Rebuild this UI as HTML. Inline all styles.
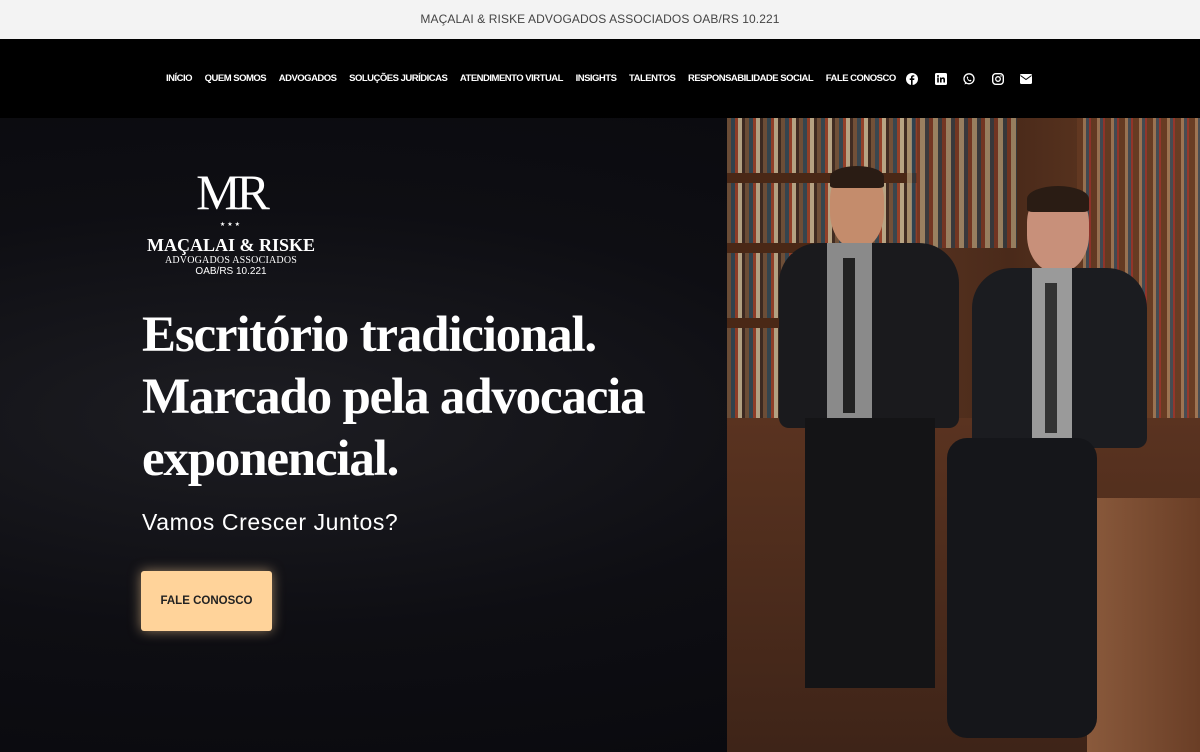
<!DOCTYPE html>
<html><head><meta charset="utf-8"><style>
*{margin:0;padding:0;box-sizing:border-box}
body{width:1200px;height:752px;overflow:hidden;background:#0b0b10;font-family:"Liberation Sans",sans-serif}
.top{height:39px;background:#f3f3f3;color:#444;font-size:12px;letter-spacing:.1px;text-align:center;line-height:39px}
.nav{height:79px;background:#000;position:relative}
.links{position:absolute;left:166px;top:34px;white-space:nowrap;font-size:0}
.nav a{color:#fff;font-size:9.5px;font-weight:bold;margin-right:12.6px;text-decoration:none;letter-spacing:-.5px}
.nav svg{position:absolute;top:73px}
.hero{position:relative;height:634px;background:radial-gradient(ellipse at 260px 300px,#1d1d22 0%,#0e0e13 45%,#08080c 100%)}
.photo{position:absolute;left:727px;top:0;width:473px;height:634px;background:linear-gradient(90deg,#3a2218,#5b3522 30%,#4a2a1a 60%,#6b3e24);overflow:hidden}
h1{position:absolute;left:142px;top:186px;color:#fff;font-family:"Liberation Serif",serif;font-size:51px;font-weight:bold;line-height:62px;letter-spacing:-1.2px;white-space:nowrap}
.sub{position:absolute;left:142px;top:391px;color:#fff;font-size:23px;letter-spacing:.6px}
.btn{position:absolute;left:141px;top:453px;width:131px;height:60px;background:#ffd39a;border-radius:3px;box-shadow:0 0 12px rgba(255,211,154,.55);color:#222;font-size:11.5px;font-weight:bold;text-align:center;line-height:60px}
.logo{position:absolute;left:141px;top:45px;color:#fff;text-align:center;width:180px;font-family:"Liberation Serif",serif;white-space:nowrap}
</style></head><body>
<div class="top">MAÇALAI &amp; RISKE ADVOGADOS ASSOCIADOS OAB/RS 10.221</div>
<div class="nav">
<div class="links"><a>INÍCIO</a><a>QUEM SOMOS</a><a>ADVOGADOS</a><a>SOLUÇÕES JURÍDICAS</a><a>ATENDIMENTO VIRTUAL</a><a>INSIGHTS</a><a>TALENTOS</a><a>RESPONSABILIDADE SOCIAL</a><a>FALE CONOSCO</a></div>
<svg style="left:906px;top:34px" width="12" height="12" viewBox="0 0 12 12"><circle cx="6" cy="6" r="6" fill="#fff"/><path d="M6.6 12V7h1.6l.2-1.6H6.6v-1c0-.5.2-.8.8-.8h.9V2.2H7.1C5.9 2.2 5 2.9 5 4.2v1.2H3.7V7H5v5z" fill="#000"/></svg>
<svg style="left:935px;top:34px" width="12" height="12" viewBox="0 0 12 12"><rect width="12" height="12" rx="1.5" fill="#fff"/><rect x="2.2" y="4.5" width="1.6" height="5" fill="#000"/><circle cx="3" cy="3" r="1" fill="#000"/><path d="M5 4.5h1.5v.8c.4-.6 1-.9 1.7-.9 1.2 0 1.8.8 1.8 2.2v2.9H8.4V7c0-.7-.3-1.1-.8-1.1s-1 .4-1 1.1v2.5H5z" fill="#000"/></svg>
<svg style="left:963px;top:34px" width="12" height="12" viewBox="0 0 12 12"><circle cx="6" cy="5.8" r="5" fill="none" stroke="#fff" stroke-width="1.3"/><path d="M1.5 11.5l.8-2.6 1.6 1.5z" fill="#fff"/><path d="M4 3.8c.3-.4.8-.3 1 .2l.3.8-.5.6c.4.8 1 1.4 1.8 1.8l.6-.5.8.3c.5.2.5.7.2 1-.6.6-1.6.5-2.7-.3C4.4 6.7 3.4 4.7 4 3.8z" fill="#fff"/></svg>
<svg style="left:992px;top:34px" width="12" height="12" viewBox="0 0 12 12"><rect x=".7" y=".7" width="10.6" height="10.6" rx="3" fill="none" stroke="#fff" stroke-width="1.4"/><circle cx="6" cy="6" r="2.3" fill="none" stroke="#fff" stroke-width="1.3"/><circle cx="9" cy="3" r=".7" fill="#fff"/></svg>
<svg style="left:1020px;top:35px" width="12" height="10" viewBox="0 0 12 10"><rect width="12" height="10" rx="1.2" fill="#fff"/><path d="M.5 1.5L6 5.5l5.5-4" fill="none" stroke="#000" stroke-width="1"/></svg>
</div>
<div class="hero">
<div class="photo">
 <div style="position:absolute;left:0;top:0;width:190px;height:300px;background:repeating-linear-gradient(90deg,#7a5a40 0 4px,#2f4d5e 4px 8px,#a8452c 8px 11px,#d8c9a4 11px 15px,#3b2a22 15px 18px);opacity:.75"></div>
 <div style="position:absolute;left:0;top:55px;width:190px;height:10px;background:#4a2816"></div>
 <div style="position:absolute;left:0;top:125px;width:190px;height:10px;background:#4a2816"></div>
 <div style="position:absolute;left:0;top:200px;width:190px;height:10px;background:#4a2816"></div>
 <div style="position:absolute;left:180px;top:0;width:110px;height:130px;background:repeating-linear-gradient(90deg,#c9b58c 0 5px,#2a4050 5px 9px,#8a3b26 9px 13px);opacity:.6"></div>
 <div style="position:absolute;left:350px;top:0;width:123px;height:330px;background:repeating-linear-gradient(90deg,#6b3e24 0 6px,#c8a27a 6px 9px,#2d5a7a 9px 12px,#b33 12px 14px);opacity:.55"></div>
 <div style="position:absolute;left:0;top:300px;width:473px;height:334px;background:linear-gradient(180deg,#5a3320,#3e2418)"></div>
 <div style="position:absolute;left:360px;top:380px;width:113px;height:254px;background:linear-gradient(90deg,#8a5a3c,#6a3e26)"></div>
 <div style="position:absolute;left:103px;top:50px;width:54px;height:80px;background:#c48c6c;border-radius:40% 40% 45% 45%"></div>
 <div style="position:absolute;left:103px;top:48px;width:54px;height:22px;background:#2a1c14;border-radius:50% 50% 10% 10%"></div>
 <div style="position:absolute;left:52px;top:125px;width:180px;height:185px;background:#1a1a1d;border-radius:40px 40px 10px 10px"></div>
 <div style="position:absolute;left:100px;top:125px;width:45px;height:175px;background:#8a8a8a"></div>
 <div style="position:absolute;left:116px;top:140px;width:12px;height:155px;background:#222"></div>
 <div style="position:absolute;left:78px;top:300px;width:130px;height:270px;background:#141416"></div>
 <div style="position:absolute;left:300px;top:72px;width:62px;height:82px;background:#c8907a;border-radius:40% 40% 45% 45%"></div>
 <div style="position:absolute;left:300px;top:68px;width:62px;height:26px;background:#2a1c14;border-radius:50% 50% 10% 10%"></div>
 <div style="position:absolute;left:245px;top:150px;width:175px;height:180px;background:#1b1c20;border-radius:40px 40px 10px 10px"></div>
 <div style="position:absolute;left:305px;top:150px;width:40px;height:170px;background:#9a9a9a"></div>
 <div style="position:absolute;left:318px;top:165px;width:12px;height:150px;background:#333"></div>
 <div style="position:absolute;left:220px;top:320px;width:150px;height:300px;background:#15161a;border-radius:20px"></div>
</div>
<div class="logo">
 <div style="font-size:50px;line-height:58px;letter-spacing:-4px">MR</div>
 <div style="font-size:6px;letter-spacing:2px;line-height:8px">★★★</div>
 <div style="font-size:18px;font-weight:bold;letter-spacing:0;margin-top:6px;line-height:20px">MAÇALAI &amp; RISKE</div>
 <div style="font-size:10px;letter-spacing:.2px;line-height:11px">ADVOGADOS ASSOCIADOS</div>
 <div style="font-size:10px;font-family:'Liberation Sans',sans-serif;line-height:12px">OAB/RS 10.221</div>
</div>
<h1>Escritório tradicional.<br>Marcado pela advocacia<br>exponencial.</h1>
<div class="sub">Vamos Crescer Juntos?</div>
<div class="btn">FALE CONOSCO</div>
</div>
</body></html>
